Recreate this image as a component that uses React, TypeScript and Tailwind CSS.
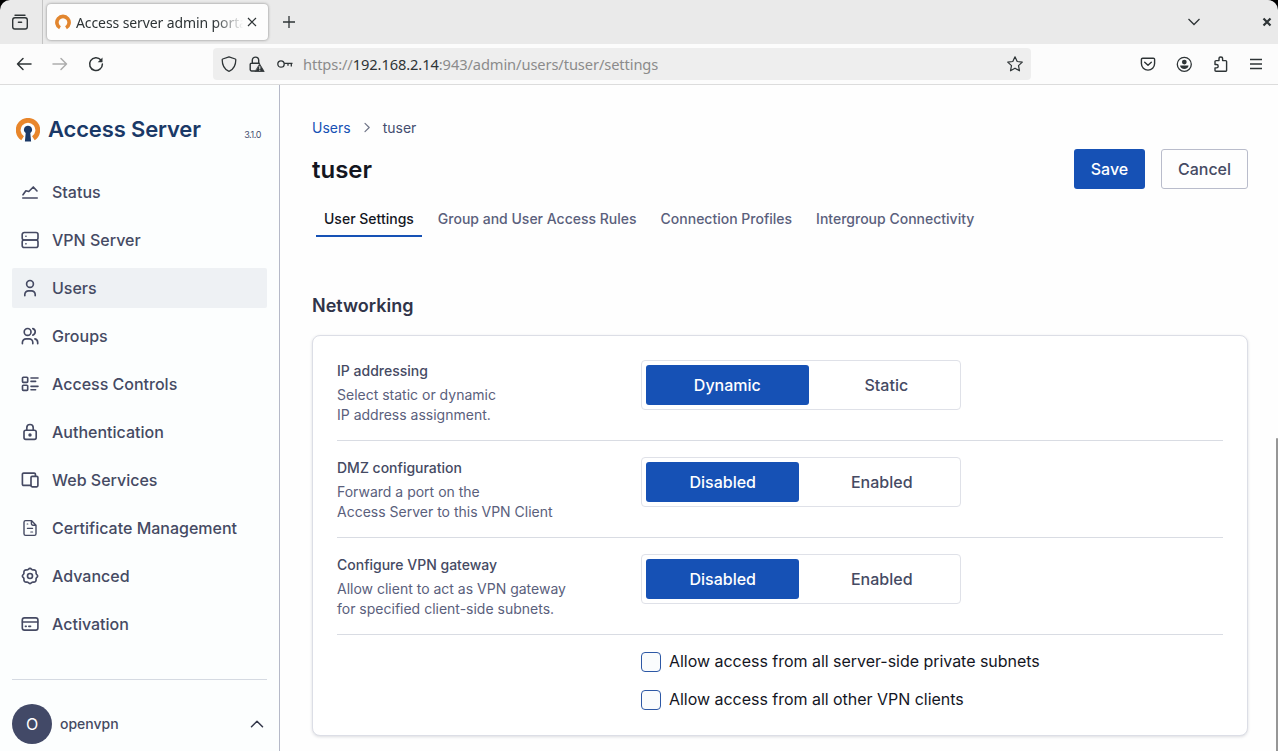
import React, { useState } from "react";

type IconProps = {
    children: React.ReactNode;
    className?: string;
};

const Icon: React.FC<IconProps> = ({ children, className = "size-5" }) => (
    <svg
        viewBox="0 0 20 20"
        fill="none"
        stroke="currentColor"
        strokeWidth={1.65}
        strokeLinecap="round"
        strokeLinejoin="round"
        className={`shrink-0 ${className}`}
    >
        {children}
    </svg>
);

const navItems: { label: string; icon: React.ReactNode }[] = [
    {
        label: "Status",
        icon: <path d="M2.8 16H17.2M3 12.8 5.9 8.8 8.800 9.500 13.3 5 17 9" />,
    },
    {
        label: "VPN Server",
        icon: (
            <>
                <rect x="2.2" y="2.5" width="15.8" height="7.5" rx="2" />
                <rect x="2.2" y="10" width="15.8" height="7.5" rx="2" />
                <path d="M5.9 6.2h.1M5.9 13.8h.1" />
            </>
        ),
    },
    {
        label: "Users",
        icon: (
            <>
                <circle cx="10" cy="5.9" r="3.4" />
                <path d="M4.8 17.7v-1.2a3.7 3.7 0 0 1 3.7-3.7h3a3.7 3.7 0 0 1 3.7 3.7v1.2" />
            </>
        ),
    },
    {
        label: "Groups",
        icon: (
            <>
                <circle cx="7.6" cy="5.9" r="3.4" />
                <path d="M2.4 17.7v-1.2a3.7 3.7 0 0 1 3.7-3.7h3a3.7 3.7 0 0 1 3.7 3.7v1.2M12.8 2.6a3.4 3.4 0 0 1 0 6.5M14.9 12.9a3.6 3.6 0 0 1 2.8 3.5v1.3" />
            </>
        ),
    },
    {
        label: "Access Controls",
        icon: (
            <>
                <rect x="2.5" y="3.2" width="5.2" height="5.2" rx="0.8" />
                <rect x="2.5" y="11.2" width="5.2" height="5.2" rx="0.8" />
                <path d="M11 4h7M11 7.4h4.6M11 12.3h7M11 15.7h4.6" />
            </>
        ),
    },
    {
        label: "Authentication",
        icon: (
            <>
                <rect x="4" y="8.2" width="12.2" height="9.2" rx="1.8" />
                <path d="M6.8 8V5.7a3.2 3.2 0 0 1 6.4 0V8" />
                <circle cx="10" cy="12.9" r="0.9" fill="currentColor" />
            </>
        ),
    },
    {
        label: "Web Services",
        icon: (
            <>
                <path d="M10.8 15.4H3.6a1.2 1.2 0 0 1-1.2-1.2V4.3a1.2 1.2 0 0 1 1.2-1.2h10.6a1.2 1.2 0 0 1 1.2 1.2V6" />
                <rect x="11" y="6.4" width="6.9" height="10.4" rx="1.2" />
            </>
        ),
    },
    {
        label: "Certificate Management",
        icon: (
            <>
                <path d="M11.4 2.6H5.6A1.6 1.6 0 0 0 4 4.2v11.6a1.6 1.6 0 0 0 1.6 1.6h8.8a1.6 1.6 0 0 0 1.6-1.6V7.2zM11.4 2.8v2.8A1.6 1.6 0 0 0 13 7.2h2.8" strokeWidth={1.4} />
                <path d="M7.2 6h.6M7.4 10.4h5.2M10.8 14h1.8" strokeWidth={1.2} />
            </>
        ),
    },
    {
        label: "Advanced",
        icon: (
            <>
                <path d="M8.300 3.400Q10 1.300 11.700 3.400 12.500 4.200 13.500 3.900 16.200 3.800 16.100 6.500 15.800 7.500 16.600 8.300 18.700 10 16.600 11.700 15.800 12.500 16.100 13.500 16.200 16.200 13.500 16.100 12.500 15.800 11.700 16.600 10 18.700 8.300 16.600 7.500 15.800 6.500 16.100 3.800 16.200 3.900 13.500 4.200 12.500 3.400 11.700 1.300 10 3.400 8.300 4.200 7.500 3.900 6.500 3.800 3.800 6.500 3.900 7.500 4.200 8.300 3.400Z" />
                <circle cx="10" cy="10" r="2.5" />
            </>
        ),
    },
    {
        label: "Activation",
        icon: (
            <>
                <rect x="2.3" y="3.9" width="15.6" height="12.2" rx="2.2" />
                <path d="M2.5 8h15.2M5.4 12.3h.8M8.8 12.3h1.8" />
            </>
        ),
    },
];

const tabs = ["User Settings", "Group and User Access Rules", "Connection Profiles", "Intergroup Connectivity"];

const settings = [
    {
        title: "IP addressing",
        lines: ["Select static or dynamic", "IP address assignment."],
        options: ["Dynamic", "Static"],
    },
    {
        title: "DMZ configuration",
        lines: ["Forward a port on the", "Access Server to this VPN Client"],
        options: ["Disabled", "Enabled"],
    },
    {
        title: "Configure VPN gateway",
        lines: ["Allow client to act as VPN gateway", "for specified client-side subnets."],
        options: ["Disabled", "Enabled"],
    },
];

const BrowserChrome: React.FC = () => (
    <header className="bg-black font-['Noto_Sans',sans-serif] text-[#2e3436]">
        <div className="flex h-11 items-center rounded-t-[10px] bg-[#eaeaea]">
            <div className="flex h-11 w-[43px] items-center justify-center border-r border-[#c4c4c4] pr-0.5">
                <svg viewBox="0 0 18 18" className="size-[18px]" fill="none" stroke="currentColor" strokeWidth="1.4" strokeLinecap="round">
                    <path d="M4 2.2h10" />
                    <rect x="1.7" y="4.7" width="14.6" height="11.3" rx="2.2" />
                    <path d="M7.4 9.2h3.2" />
                </svg>
            </div>
            <div className="ml-1 flex h-9 w-[221px] items-center rounded bg-[#fdfdfd] pl-2 shadow-[0_0_3px_rgba(0,0,0,0.45)]">
                <svg viewBox="0 0 16 16" className="size-4 shrink-0" fill="none" stroke="#e2862f" strokeWidth="3.6">
                    <path d="M5 13.8A6.1 6.1 0 1 1 11 13.8" />
                </svg>
                <span className="ml-[5px] w-[169px] overflow-hidden whitespace-nowrap text-[14px] tracking-[-0.1px] [mask-image:linear-gradient(to_right,black_82%,transparent_99%)]">
                    Access server admin portal
                </span>
                <svg viewBox="0 0 10 10" className="ml-0.5 size-2.5 shrink-0" stroke="currentColor" strokeWidth="1.2">
                    <path d="m1 1 8 8M9 1 1 9" />
                </svg>
            </div>
            <svg viewBox="0 0 12 12" className="ml-[15px] size-3" stroke="currentColor" strokeWidth="1.3">
                <path d="M6 0v12M0 6h12" />
            </svg>
            <div className="flex-1" />
            <svg viewBox="0 0 12 8" className="mr-[62px] h-2 w-3" fill="none" stroke="currentColor" strokeWidth="1.3">
                <path d="m.5 1 5.5 5.5L11.5 1" />
            </svg>
            <svg viewBox="0 0 10 10" className="mr-1.5 size-2.5" stroke="currentColor" strokeWidth="2.2">
                <path d="m1.5 1.5 7 7M8.5 1.5l-7 7" />
            </svg>
        </div>

        <div className="flex h-[41px] items-center border-b border-[#dcdcdc] bg-[#fcfcfc] pl-4 pr-3.5">
            <svg viewBox="0 0 16 16" className="size-4" fill="none" stroke="currentColor" strokeWidth="1.5" strokeLinecap="round" strokeLinejoin="round">
                <path d="M15 8H1.5M7 2.5 1.5 8 7 13.5" />
            </svg>
            <svg viewBox="0 0 16 16" className="ml-5 size-4 text-[#adadad]" fill="none" stroke="currentColor" strokeWidth="1.5" strokeLinecap="round" strokeLinejoin="round">
                <path d="M1 8h13.5M9 2.5 14.5 8 9 13.5" />
            </svg>
            <svg viewBox="0 0 16 16" className="ml-5 size-4" fill="none" stroke="currentColor" strokeWidth="1.5" strokeLinecap="round">
                <path d="M12.9 4A6.4 6.4 0 1 0 14.4 8" />
                <path d="M14.5 1.5v4.8H9.7z" fill="currentColor" stroke="none" />
            </svg>

            <div className="ml-[109px] flex h-8 w-[818px] items-center rounded bg-[#eeeeee] pl-2 pr-2">
                <svg viewBox="0 0 16 16" className="size-4" fill="none" stroke="currentColor" strokeWidth="1.3" strokeLinejoin="round">
                    <path d="M8 .8 14.3 3c.3.1.5.4.5.7 0 5.3-2.4 9.5-6.4 11.5a1 1 0 0 1-.8 0C3.6 13.2 1.2 9 1.2 3.7c0-.3.2-.6.5-.7z" />
                </svg>
                <svg viewBox="0 0 16 16" className="ml-3 size-4" fill="none" stroke="currentColor" strokeWidth="1.4" strokeLinecap="round">
                    <path d="M3.3 7V4.3a3.2 3.2 0 0 1 6.4 0V7M6 15H2.6a1.4 1.4 0 0 1-1.4-1.4V8.6a1.4 1.4 0 0 1 1.4-1.4h7.8" />
                    <path d="M10.8 8.3 15.2 15.5H6.4z" fill="currentColor" strokeLinejoin="round" strokeWidth=".8" />
                    <path d="M10.8 10.5v2.2M10.8 14.2v.1" stroke="#eeeeee" strokeWidth="1.1" />
                </svg>
                <svg viewBox="0 0 16 16" className="ml-3 size-4" fill="none" stroke="currentColor" strokeWidth="1.3">
                    <circle cx="4" cy="8" r="3.2" />
                    <path d="M7.2 7.4h8.3M11 7.4v2.4M14.3 7.4v3.2" />
                </svg>
                <span className="ml-2.5 flex-1 whitespace-nowrap text-[14.67px] tracking-[-0.1px] text-[#8b8b8b]">
                    https://<span className="text-[#2e3436]">192.168.2.14</span>:943/admin/users/tuser/settings
                </span>
                <svg viewBox="0 0 16 16" className="size-4" fill="none" stroke="currentColor" strokeWidth="1.2" strokeLinejoin="round">
                    <path d="m8 .8 2.2 4.7 5.1.6-3.8 3.5 1 5.2L8 12.2l-4.5 2.6 1-5.2L.7 6.1l5.1-.6z" />
                </svg>
            </div>

            <div className="ml-auto flex items-center gap-5">
                <svg viewBox="0 0 16 16" className="size-4" fill="none" stroke="currentColor" strokeWidth="1.4" strokeLinecap="round" strokeLinejoin="round">
                    <path d="M2.7 2.2h10.6a1.3 1.3 0 0 1 1.3 1.3V7.5a6.6 6.6 0 0 1-13.2 0V3.5a1.3 1.3 0 0 1 1.3-1.3Z" />
                    <path d="m4.7 6.2 3.3 3 3.3-3" />
                </svg>
                <svg viewBox="0 0 16 16" className="size-4" fill="none" stroke="currentColor" strokeWidth="1.3">
                    <circle cx="8.3" cy="8.3" r="7" />
                    <circle cx="8.3" cy="6.1" r="2.4" fill="currentColor" stroke="none" />
                    <path d="M4.1 9.5h8.4c0 2-2 3.6-4.2 3.6s-4.2-1.6-4.2-3.6Z" fill="currentColor" stroke="none" />
                </svg>
                <svg viewBox="0 0 16 16" className="size-4" fill="none" stroke="currentColor" strokeWidth="1.4" strokeLinejoin="round">
                    <path d="M2.2 8.3V5.4c0-.6.4-1 1-1h3V2.6a1.8 1.8 0 0 1 3.6 0v1.8h3c.6 0 1 .4 1 1v9c0 .4-.3.7-.7.7H3.2c-.6 0-1-.4-1-1v-2.4h1.5a1.7 1.7 0 0 0 0-3.4z" transform="translate(.8 .2)" />
                </svg>
                <svg viewBox="0 0 16 16" className="size-4" stroke="currentColor" strokeWidth="1.3">
                    <path d="M2 3.5h12M2 8h12M2 12.5h12" />
                </svg>
            </div>
        </div>
    </header>
);

const Sidebar: React.FC<{ active: string; onSelect: (label: string) => void }> = ({ active, onSelect }) => (
    <aside className="flex w-[280px] shrink-0 flex-col border-r border-[#b5b9c8] bg-[#fcfefe] px-3">
        <div className="flex h-[87px] items-center pl-1 pt-0.5">
            <svg viewBox="0 0 24 24" className="size-6" fill="none">
                <path d="M6.6 20.3A9.8 9.8 0 1 1 17.4 20.3" stroke="#e8862b" strokeWidth="4.8" />
                <path d="M12 7.8a4 4 0 0 1 2.3 7.3l.8 8.4H8.900l.8-8.400A4 4 0 0 1 12 7.8Z" fill="#1a3967" />
            </svg>
            <span className="ml-2 text-[22px] font-semibold tracking-[-0.15px] text-[#1a3967]">Access Server</span>
            <span className="ml-auto mr-1.5 mt-2.5 text-[9px] tracking-[-0.4px] text-[#454e70]">3.1.0</span>
        </div>

        <nav className="flex flex-col gap-2">
            {navItems.map(({ label, icon }) => (
                <button
                    key={label}
                    onClick={() => onSelect(label)}
                    className={`flex h-10 w-[255px] items-center gap-3 rounded-xs px-2 text-base font-medium text-[#454a63] ${
                        active === label ? "bg-[#eef1f4]" : ""
                    }`}
                >
                    <Icon>{icon}</Icon>
                    {label}
                </button>
            ))}
        </nav>

        <div className="mt-auto flex h-[72px] w-[255px] items-center border-t border-[#d5dae2] pt-[17px]">
            <div className="flex size-10 items-center justify-center rounded-full bg-[#424967] text-base text-white">O</div>
            <span className="ml-2 text-sm font-medium text-[#454a63]">openvpn</span>
            <Icon className="ml-auto size-5 text-[#33374a]">
                <path d="m4.5 12.8 5.5-5.6 5.5 5.6" strokeWidth={1.5} />
            </Icon>
        </div>
    </aside>
);

const App: React.FC = () => {
    const [active, setActive] = useState("Users");
    const [tab, setTab] = useState("User Settings");
    const [selected, setSelected] = useState<string[]>(["Dynamic", "Disabled", "Disabled"]);

    const select = (index: number, option: string) => {
        setSelected(selected.map((value, i) => (i === index ? option : value)));
    };

    return (
        <div className="flex h-[751px] w-[1278px] flex-col overflow-hidden bg-white font-['Inter',sans-serif]">
            <BrowserChrome />
            <div className="flex min-h-0 flex-1">
                <Sidebar active={active} onSelect={setActive} />

                <main className="flex-1 bg-[#fefefe] pl-8 pr-7 pt-[33px]">
                    <div className="flex h-5 items-center text-sm text-[#454e70]">
                        <a href="#" className="text-[#1651b5]">Users</a>
                        <svg viewBox="0 0 16 16" className="mx-2 size-4" fill="none" stroke="#6f7487" strokeWidth="1.2" strokeLinecap="round" strokeLinejoin="round">
                            <path d="m6 3.3 4.2 4.2L6 11.7" />
                        </svg>
                        <span>tuser</span>
                    </div>

                    <div className="mt-[11px] flex h-10 items-center">
                        <h1 className="pt-0.5 text-2xl font-semibold text-[#14161f]">tuser</h1>
                        <button className="ml-auto h-10 w-[71px] rounded-[3px] bg-[#1651b5] text-base font-medium text-white">Save</button>
                        <button className="ml-4 h-10 w-[87px] rounded-[3px] border border-[#b9bccb] text-base font-medium text-[#454a63]">Cancel</button>
                    </div>

                    <div className="ml-1 mt-3 flex h-9 gap-2 text-sm font-medium text-[#5a607c]">
                        {tabs.map((name) => (
                            <button
                                key={name}
                                onClick={() => setTab(name)}
                                className={`border-b-2 px-2 pt-0.5 ${
                                    tab === name ? "border-[#1651b5] text-[#14161f]" : "border-transparent"
                                }`}
                            >
                                {name}
                            </button>
                        ))}
                    </div>

                    <h2 className="mt-[55px] text-lg leading-7 font-semibold text-[#303449]">Networking</h2>

                    <section className="mt-[15px] h-[401px] rounded-lg border border-[#dcdee6] bg-white px-6 pt-2 shadow-[0_1px_3px_rgba(60,65,90,0.18)]">
                        {settings.map(({ title, lines, options }, index) => (
                            <div key={title} className="flex h-[97px] border-b border-[#d9dce3] pt-4">
                                <div className="w-[304px] pt-px text-sm text-[#5a607c]">
                                    <h3 className="mb-1 font-medium text-[#454a63]">{title}</h3>
                                    <p>
                                        {lines[0]}
                                        <br />
                                        {lines[1]}
                                    </p>
                                </div>
                                <div className="flex h-[50px] w-80 gap-2 rounded border border-[#dfe1e8] p-1">
                                    {options.map((option) => (
                                        <button
                                            key={option}
                                            onClick={() => select(index, option)}
                                            className={`flex-auto rounded-[3px] text-base font-medium ${
                                                selected[index] === option ? "bg-[#1651b5] text-white" : "text-[#454a63]"
                                            }`}
                                        >
                                            {option}
                                        </button>
                                    ))}
                                </div>
                            </div>
                        ))}
                        <div className="ml-[304px] mt-[17px] flex flex-col gap-[18px] text-base leading-5 tracking-[-0.03px] text-[#14161f]">
                            {["Allow access from all server-side private subnets", "Allow access from all other VPN clients"].map((label) => (
                                <label key={label} className="flex h-5 items-center gap-2">
                                    <input type="checkbox" className="size-5 appearance-none rounded border border-[#2d58a5] bg-[#fafcfd] checked:bg-[#1651b5]" />
                                    <span className="pb-0.5">{label}</span>
                                </label>
                            ))}
                        </div>
                    </section>
                </main>

                <div className="flex w-0.5 flex-col justify-end bg-[#fefefe]">
                    <div className="h-[313px] rounded-t bg-[#969696]" />
                </div>
            </div>
        </div>
    );
};

export default App;
